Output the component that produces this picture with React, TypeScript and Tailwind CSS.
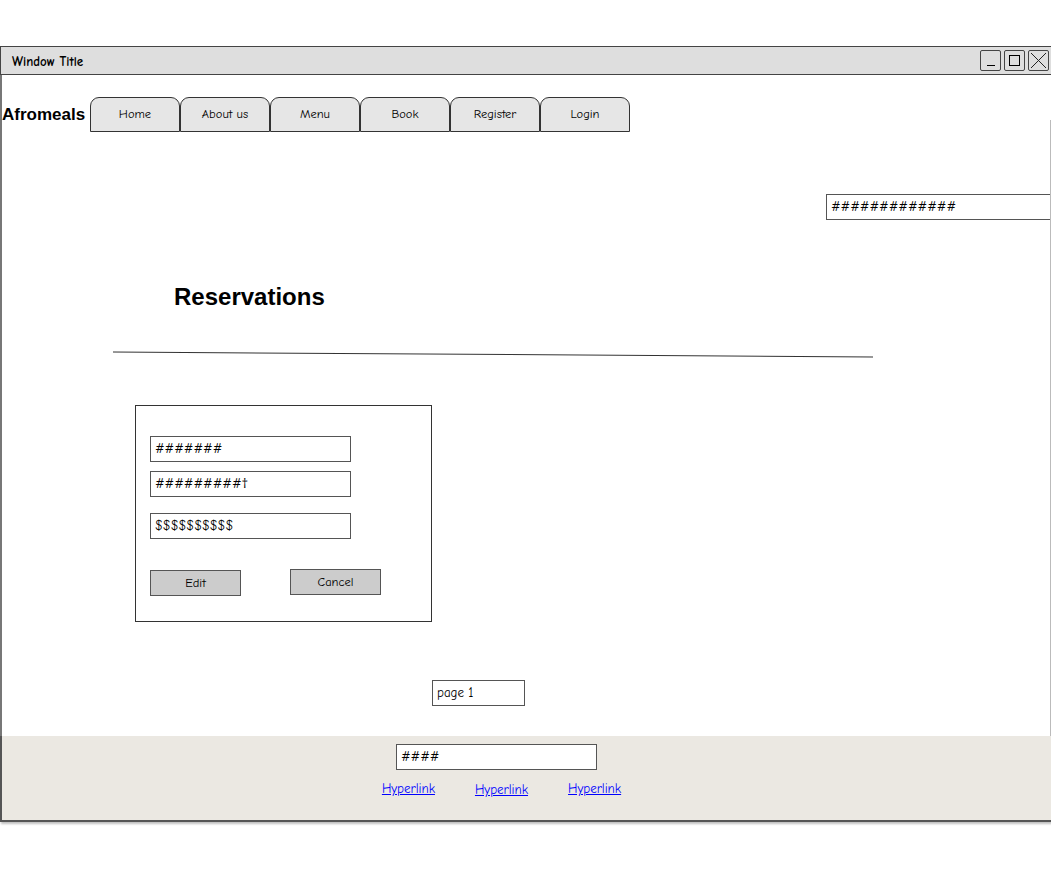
import React from "react";

const sketchFont = {
  fontFamily: '"Comic Sans MS", "Comic Neue", "Open Sans", "DejaVu Sans", sans-serif',
};

const navItems = ["Home", "About us", "Menu", "Book", "Register", "Login"];

const Field = ({ text, className = "" }: { text: string; className?: string }) => (
  <div
    className={`flex h-[26px] items-center border border-[#555] bg-white pl-[4px] text-[13px] font-medium text-black ${className}`}
  >
    {text}
  </div>
);

const Button = ({ label, className = "" }: { label: string; className?: string }) => (
  <div
    className={`flex h-[26px] w-[91px] items-center justify-center border border-[#555] bg-[#cccccc] text-[12.5px] font-medium text-black ${className}`}
  >
    {label}
  </div>
);

export default function App() {
  return (
    <div className="h-[881px] w-[1051px] overflow-hidden bg-white" style={sketchFont}>
      <div className="mt-[46px] flex w-[1051px] flex-col">
        {/* title bar */}
        <div className="flex h-[29px] items-center justify-between border-y border-l border-[#444] bg-[#dedede] pl-[11px] pr-[2px]">
          <span className="mt-[2px] text-[13px] font-bold text-black">Window Title</span>
          <div className="flex gap-[3px]">
            <div className="flex h-[21px] w-[21px] items-end justify-center rounded-[2px] border border-[#444] pb-[4px]">
              <div className="h-[1px] w-[8px] bg-black" />
            </div>
            <div className="flex h-[21px] w-[21px] items-center justify-center rounded-[2px] border border-[#444]">
              <div className="h-[11px] w-[11px] border border-black" />
            </div>
            <div className="flex h-[21px] w-[21px] items-center justify-center rounded-[2px] border border-[#444]">
              <svg width="17" height="17" viewBox="0 0 17 17">
                <path d="M1 1 L16 16 M16 1 L1 16" stroke="#222" strokeWidth="1" />
              </svg>
            </div>
          </div>
        </div>

        {/* body */}
        <div className="relative flex h-[661px] flex-col border-l-2 border-[#777]">
          <div className="absolute right-0 top-[45px] h-[616px] w-[1px] bg-[#bbb]" />

          <div className="mt-[22px] flex items-center">
            <span className="w-[88px] text-[17px] font-bold text-black" style={{ fontFamily: '"Liberation Sans", Arial, sans-serif' }}>
              Afromeals
            </span>
            <div className="flex">
              {navItems.map((item) => (
                <div
                  key={item}
                  className="flex h-[35px] w-[90px] items-center justify-center rounded-t-[9px] border border-[#333] bg-[#e6e6e6] text-[12.5px] font-medium text-black"
                >
                  {item}
                </div>
              ))}
            </div>
          </div>

          <div className="mt-[62px] flex justify-end">
            <Field text="#############" className="w-[225px] border-r-0" />
          </div>

          <h1
            className="ml-[172px] mt-[63px] text-[24px] font-bold leading-[28px] text-black"
            style={{ fontFamily: '"Liberation Sans", Arial, sans-serif' }}
          >
            Reservations
          </h1>

          <div className="ml-[111px] mt-[43px] h-[1px] w-[760px] rotate-[0.38deg] bg-[#333]" />

          <div className="ml-[133px] mt-[50px] flex h-[217px] w-[297px] flex-col border border-[#333] px-[14px] pt-[30px]">
            <Field text="#######" className="w-[201px]" />
            <Field text="#########†" className="mt-[9px] w-[201px]" />
            <Field text="$$$$$$$$$$" className="mt-[16px] w-[201px]" />
            <div className="mt-[30px] flex items-start gap-[49px]">
              <Button label="Edit" className="mt-[1px]" />
              <Button label="Cancel" />
            </div>
          </div>

          <div className="ml-[430px] mt-[58px]">
            <Field text="page 1" className="w-[93px] text-[12.5px]" />
          </div>
        </div>

        {/* footer */}
        <div className="flex h-[86px] flex-col items-center border-b-2 border-l-2 border-[#555] bg-[#ebe8e2] pt-[8px] shadow-[1px_2px_2px_rgba(0,0,0,0.25)]">
          <Field text="####" className="ml-[-60px] w-[201px]" />
          <div className="ml-[-50px] mt-[9px] flex gap-[40px] text-[13px] font-medium">
            <a href="#" className="text-[#0000ff] underline">Hyperlink</a>
            <a href="#" className="mt-[1px] text-[#0000ff] underline">Hyperlink</a>
            <a href="#" className="text-[#0000ff] underline">Hyperlink</a>
          </div>
        </div>
      </div>
    </div>
  );
}
